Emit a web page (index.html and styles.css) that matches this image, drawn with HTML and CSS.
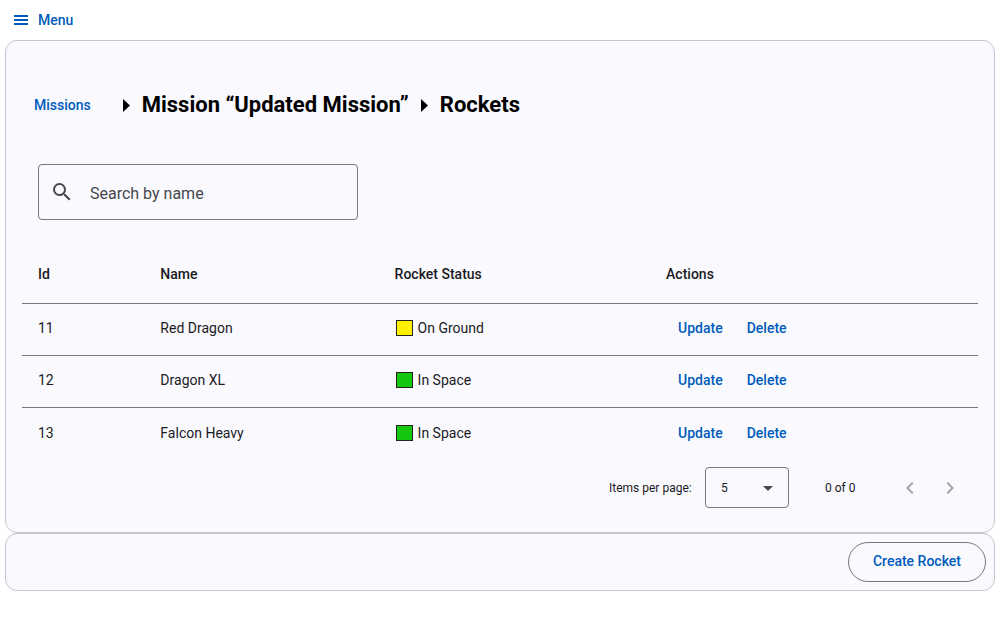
FILE: index.html
```html
<!DOCTYPE html>
<html lang="en">
<head>
<meta charset="utf-8">
<meta name="viewport" content="width=device-width, initial-scale=1">
<title>Rockets</title>
<link rel="stylesheet" href="styles.css">
</head>
<body>
<header class="topbar">
  <button class="menu-button" type="button">
    <svg class="menu-icon" viewBox="0 0 18 18" aria-hidden="true"><path d="M2 4h14v2H2zM2 8h14v2H2zM2 12h14v2H2z"/></svg>
    Menu
  </button>
</header>
<main>
  <section class="card content">
    <nav class="breadcrumbs" aria-label="Breadcrumb">
      <a class="crumb-link" href="#">Missions</a>
      <svg class="crumb-arrow" viewBox="0 0 7 13" aria-hidden="true"><path d="M0 0l7 6.500-7 6.500z"/></svg>
      <h1 class="crumb-title">Mission “Updated Mission”</h1>
      <svg class="crumb-arrow" viewBox="0 0 7 13" aria-hidden="true"><path d="M0 0l7 6.500-7 6.500z"/></svg>
      <h1 class="crumb-title">Rockets</h1>
    </nav>
    <label class="search">
      <svg class="search-icon" viewBox="0 0 24 24" aria-hidden="true"><path d="M15.5 14h-.79l-.28-.27A6.47 6.47 0 0 0 16 9.5 6.5 6.5 0 1 0 9.5 16c1.61 0 3.09-.59 4.23-1.57l.27.28v.79l5 4.99L20.49 19l-4.99-5zm-6 0C7.01 14 5 11.99 5 9.5S7.01 5 9.5 5 14 7.01 14 9.5 11.99 14 9.5 14z"/></svg>
      <input class="search-input" type="text" placeholder="Search by name" aria-label="Search by name">
    </label>
    <table class="rockets">
      <colgroup><col class="col-id"><col class="col-name"><col class="col-status"><col></colgroup>
      <thead>
        <tr><th>Id</th><th>Name</th><th>Rocket Status</th><th>Actions</th></tr>
      </thead>
      <tbody>
        <tr>
          <td>11</td><td>Red Dragon</td>
          <td><span class="status"><span class="swatch ground"></span>On Ground</span></td>
          <td><div class="actions"><button class="text-button" type="button">Update</button><button class="text-button" type="button">Delete</button></div></td>
        </tr>
        <tr>
          <td>12</td><td>Dragon XL</td>
          <td><span class="status"><span class="swatch space"></span>In Space</span></td>
          <td><div class="actions"><button class="text-button" type="button">Update</button><button class="text-button" type="button">Delete</button></div></td>
        </tr>
        <tr>
          <td>13</td><td>Falcon Heavy</td>
          <td><span class="status"><span class="swatch space"></span>In Space</span></td>
          <td><div class="actions"><button class="text-button" type="button">Update</button><button class="text-button" type="button">Delete</button></div></td>
        </tr>
      </tbody>
    </table>
    <div class="paginator">
      <label class="page-label" for="page-size">Items per page:</label>
      <div class="select-box">
        <select class="page-size" id="page-size"><option>5</option><option>10</option><option>20</option></select>
        <svg class="select-arrow" viewBox="0 0 10 5" aria-hidden="true"><path d="M0 0h10L5 5z"/></svg>
      </div>
      <span class="range">0 of 0</span>
      <div class="pager">
        <button class="icon-button" type="button" aria-label="Previous page" disabled><svg viewBox="0 0 24 24" aria-hidden="true"><path d="M15.41 7.41L14 6l-6 6 6 6 1.41-1.41L10.83 12z"/></svg></button>
        <button class="icon-button" type="button" aria-label="Next page" disabled><svg viewBox="0 0 24 24" aria-hidden="true"><path d="M10 6L8.59 7.41 13.17 12l-4.58 4.59L10 18l6-6z"/></svg></button>
      </div>
    </div>
  </section>
  <section class="card footer">
    <button class="outlined-button" type="button">Create Rocket</button>
  </section>
</main>
</body>
</html>
```
FILE: styles.css
```css
* {
  box-sizing: border-box;
}

body {
  margin: 0;
  padding: 0 5px;
  background: #fff;
  color: #1a1b1f;
  font: 400 14px/20px Roboto, "Liberation Sans", sans-serif;
}

button {
  border: 0;
  background: none;
  color: #005cbb;
  font: inherit;
  font-weight: 500;
  cursor: pointer;
}

.topbar {
  display: flex;
  height: 40px;
}

.menu-button {
  display: flex;
  align-items: center;
  gap: 8px;
  padding: 0 7px;
}

.menu-icon {
  width: 18px;
  height: 18px;
  fill: currentColor;
}

.card {
  border: 1px solid #c4c6d0;
  border-radius: 12px;
  background: #faf9fd;
}

.content {
  padding: 40px 16px 16px;
}

.breadcrumbs {
  display: flex;
  align-items: center;
  height: 48px;
  padding-left: 12px;
}

.crumb-link {
  margin-right: 32px;
  color: #005cbb;
  font-weight: 500;
  text-decoration: none;
}

.crumb-arrow {
  width: 7px;
  height: 13px;
  margin-right: 12px;
}

.crumb-title {
  margin: 0 12px 0 0;
  color: #000;
  font-size: 22px;
  line-height: 28px;
  font-weight: 700;
}

.search {
  display: flex;
  align-items: center;
  width: 320px;
  height: 56px;
  margin: 35px 16px 24px;
  border: 1px solid #74777f;
  border-radius: 4px;
}

.search-icon {
  flex: none;
  width: 24px;
  height: 24px;
  margin: 0 16px 0 11px;
  fill: #44474e;
}

.search-input {
  flex: 1;
  min-width: 0;
  padding: 3px 0 0;
  border: 0;
  outline: 0;
  background: none;
  color: #1a1b1f;
  font: inherit;
  font-size: 16px;
  line-height: 24px;
}

.search-input::placeholder {
  color: #44474e;
  opacity: 1;
}

.rockets {
  width: 100%;
  border-collapse: separate;
  border-spacing: 0;
  table-layout: fixed;
}

.col-id {
  width: 12.8%;
}

.col-name {
  width: 24.5%;
}

.col-status {
  width: 28.4%;
}

.rockets th,
.rockets td {
  height: 52px;
  padding: 0 16px 3px;
  border-bottom: 1px solid #74777f;
  text-align: left;
}

.rockets th {
  height: 60px;
  padding-bottom: 0;
  font-weight: 500;
}

.rockets tbody tr:last-child td {
  padding-bottom: 2px;
  border-bottom: 0;
}

.status {
  display: flex;
  align-items: center;
  gap: 5px;
}

.swatch {
  width: 17px;
  height: 16px;
  margin-left: 1px;
  border: 1px solid #222;
}

.ground {
  background: #fff000;
}

.space {
  background: #14c80f;
}

.actions {
  display: flex;
}

.text-button {
  height: 40px;
  padding: 0 12px;
}

.paginator {
  display: flex;
  align-items: center;
  justify-content: flex-end;
  height: 56px;
  padding-right: 8px;
  font-size: 12px;
}

.page-label {
  min-width: 88px;
}

.select-box {
  position: relative;
  width: 84px;
  height: 41px;
  margin: 0 36px 1px 8px;
}

.page-size {
  width: 100%;
  height: 100%;
  padding: 0 15px;
  border: 1px solid #74777f;
  border-radius: 4px;
  appearance: none;
  background: none;
  color: inherit;
  font: inherit;
}

.select-arrow {
  position: absolute;
  top: 19px;
  right: 16px;
  width: 10px;
  height: 5px;
  fill: #44474e;
  pointer-events: none;
}

.range {
  min-width: 33px;
  margin-right: 32px;
}

.pager {
  display: flex;
}

.icon-button {
  display: flex;
  align-items: center;
  justify-content: center;
  width: 40px;
  height: 40px;
  padding: 0;
}

.icon-button svg {
  width: 24px;
  height: 24px;
  fill: #a4a4a8;
}

.footer {
  display: flex;
  justify-content: flex-end;
  padding: 8px;
}

.outlined-button {
  height: 40px;
  padding: 0 24px 2px;
  border: 1px solid #74777f;
  border-radius: 20px;
}
```
